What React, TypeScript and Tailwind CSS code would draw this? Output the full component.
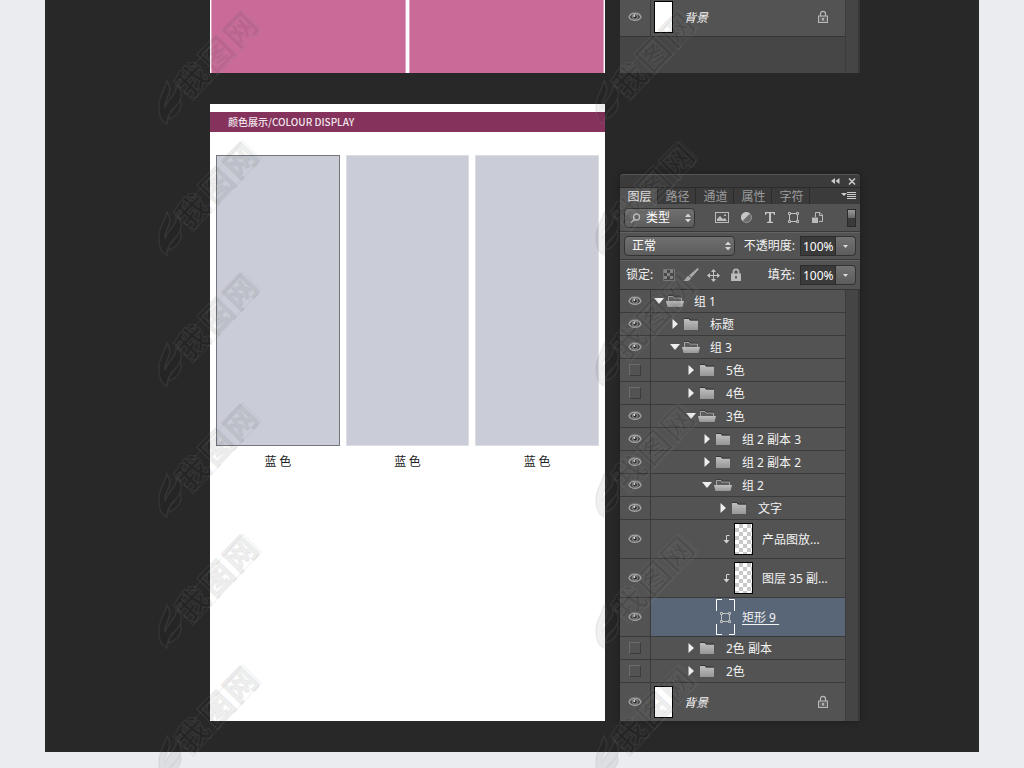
import React from 'react';

type Layer = {
  name: string;
  level: number;
  visible?: boolean;
  kind?: 'open' | 'closed' | 'clip' | 'shape';
};

const layers: Layer[] = [
  { name: '组 1', level: 0, visible: true, kind: 'open' },
  { name: '标题', level: 1, visible: true, kind: 'closed' },
  { name: '组 3', level: 1, visible: true, kind: 'open' },
  { name: '5色', level: 2, kind: 'closed' },
  { name: '4色', level: 2, kind: 'closed' },
  { name: '3色', level: 2, visible: true, kind: 'open' },
  { name: '组 2 副本 3', level: 3, visible: true, kind: 'closed' },
  { name: '组 2 副本 2', level: 3, visible: true, kind: 'closed' },
  { name: '组 2', level: 3, visible: true, kind: 'open' },
  { name: '文字', level: 4, visible: true, kind: 'closed' },
  { name: '产品图放...', level: 4, visible: true, kind: 'clip' },
  { name: '图层 35 副...', level: 4, visible: true, kind: 'clip' },
  { name: '矩形 9', level: 4, visible: true, kind: 'shape' },
  { name: '2色 副本', level: 2, kind: 'closed' },
  { name: '2色', level: 2, kind: 'closed' },
];

const indents = ['pl-px', 'pl-[17px]', 'pl-[33px]', 'pl-[49px]', 'pl-[65px]'];

function Eye() {
  return (
    <svg width="14" height="12" viewBox="0 0 14 12" fill="none">
      <path d="M1 6C3 1 11 1 13 6C11 10.500 3 10.500 1 6Z" fill="#4a4a4a" stroke="#a2a2a2" strokeWidth="1.300" />
      <path d="M1 3.500C3.500 .5 10.500 .5 13 3.500" stroke="#6c6c6c" />
      <circle cx="7" cy="5.800" r="2.400" fill="#2a2a2a" stroke="#a5a5a5" strokeWidth="0.900" />
      <circle cx="6.300" cy="5" r="1" fill="#e4e4e4" />
    </svg>
  );
}

function Folder({ open }: { open: boolean }) {
  return (
    <svg width="18" height="13" viewBox="0 0 18 13">
      <defs>
        <linearGradient id="folderFace" x1="0" y1="0" x2="0" y2="1">
          <stop offset="0" stopColor="#c0c0c0" />
          <stop offset="1" stopColor="#969696" />
        </linearGradient>
      </defs>
      {open ? (
        <>
          <path d="M2.500 7V1.500H7L8 3H15.500V7" fill="#5c5c5c" stroke="#a5a5a5" />
          <path d="M2 .5H7L8 2H16" fill="none" stroke="#333" strokeWidth=".7" />
          <path d="M0 6H18L16.500 12H1.500Z" fill="url(#folderFace)" />
        </>
      ) : (
        <>
          <path d="M2 12V1H7L8 2.500H16V12Z" fill="url(#folderFace)" />
          <path d="M2 .5H7L8 2H16" fill="none" stroke="#353535" />
        </>
      )}
    </svg>
  );
}

function Lock({ filled = false }: { filled?: boolean }) {
  return (
    <svg width="12" height="14" viewBox="0 0 12 14" fill="none">
      <path d="M3.500 6V4C3.500 .5 8.500 .5 8.500 4V6" stroke="#b9b9b9" strokeWidth={filled ? 1.8 : 1.2} />
      <rect x="1.500" y="6" width="9" height="6.500" fill={filled ? '#bdbdbd' : '#666'} stroke="#b9b9b9" />
      <path d="M6 8V10.500" stroke={filled ? '#444' : '#ccc'} strokeWidth="1.500" />
    </svg>
  );
}

function ShapeIcon() {
  return (
    <svg width="13" height="13" viewBox="0 0 13 13" fill="none" stroke="#c0c0c0">
      <path d="M3.500 2.500H9.500M3.500 10.500H9.500M2.500 3.500V9.500M10.500 3.500V9.500" />
      <path d="M1.500 1.500h2v2h-2zM9.500 1.500h2v2h-2zM1.500 9.500h2v2h-2zM9.500 9.500h2v2h-2z" />
    </svg>
  );
}

function Stepper() {
  return (
    <svg className="pointer-events-none absolute right-1 top-1/2 -translate-y-1/2" width="6" height="9" viewBox="0 0 6 9" fill="#d5d5d5">
      <path d="M0 3.500L3 0L6 3.500ZM0 5.500L3 9L6 5.500Z" />
    </svg>
  );
}

function VisibilityCell({ visible, name }: { visible?: boolean; name: string }) {
  return (
    <button
      aria-label={name}
      aria-pressed={!!visible}
      className="flex w-[31px] shrink-0 items-center justify-center border-r border-[#3a3a3a] bg-[#535353]"
    >
      {visible ? <Eye /> : <span className="size-3 border border-b-[#3c3c3c] border-l-[#6c6c6c] border-r-[#3c3c3c] border-t-[#6c6c6c]" />}
    </button>
  );
}

function ClippedThumb() {
  return (
    <>
      <svg width="7" height="9" viewBox="0 0 7 9" fill="none" stroke="#d2d2d2">
        <path d="M6.500 .5H3.500V7" />
        <path d="M.5 5H6.500L3.500 8.500Z" fill="#d2d2d2" stroke="none" />
      </svg>
      <span className="ml-1 h-8 w-[19px] border border-black bg-[repeating-conic-gradient(#c9c9c9_0%_25%,#fff_0%_50%)] bg-[length:8px_8px]" />
    </>
  );
}

function ShapeThumb() {
  return (
    <span className="flex h-9 w-[19px] flex-col items-center justify-between">
      <svg width="19" height="12" viewBox="0 0 19 12" fill="none" stroke="#fff">
        <path d="M.5 12V.5H6M13 .5H18.500V12" />
      </svg>
      <ShapeIcon />
      <svg width="19" height="11" viewBox="0 0 19 11" fill="none" stroke="#fff">
        <path d="M.5 0V10.500H6M13 10.500H18.500V0" />
      </svg>
    </span>
  );
}

function LayerRow({ layer }: { layer: Layer }) {
  const { name, level, visible, kind } = layer;
  const group = kind === 'open' || kind === 'closed';
  return (
    <li className={`flex border-b border-[#3a3a3a] ${group ? 'h-[23px]' : 'h-[39px]'}`}>
      <VisibilityCell visible={visible} name={name} />
      {group && (
        <div className={`flex grow items-center ${indents[level]}`}>
          <button aria-label={name} aria-expanded={kind === 'open'} className="flex w-[14px] items-center justify-center">
            <svg width="10" height="10" viewBox="0 0 10 10" fill="#eee">
              {kind === 'open' ? <path d="M0 2H10L5 8Z" /> : <path d="M2.500 0L8 5L2.500 10Z" />}
            </svg>
          </button>
          <Folder open={kind === 'open'} />
          <span className="ml-[10px] pt-[2px]">{name}</span>
        </div>
      )}
      {kind === 'clip' && (
        <div className="flex grow items-center pl-[72px]">
          <ClippedThumb />
          <span className="ml-[9px] pt-[2px]">{name}</span>
        </div>
      )}
      {kind === 'shape' && (
        <div className="flex grow items-center bg-[#596678] pl-[65px]">
          <ShapeThumb />
          <span className="ml-[7px] pt-[2px] underline underline-offset-2">{name}&nbsp;</span>
        </div>
      )}
    </li>
  );
}

function BackgroundRow() {
  return (
    <div className="flex h-[38px]">
      <VisibilityCell visible name="背景" />
      <div className="flex grow items-center pl-[3px] pr-4">
        <span className="h-8 w-[19px] border border-black bg-white" />
        <span className="ml-[11px] grow pt-[2px] italic">背景</span>
        <Lock />
      </div>
    </div>
  );
}

function Percent({ id, label }: { id: string; label: string }) {
  return (
    <div className="ml-auto flex items-center">
      <label htmlFor={id} className="mr-[5px]">{label}</label>
      <input id={id} defaultValue="100%" className="h-5 w-9 border border-[#2c2c2c] bg-[#3a3a3a] pl-[2px] text-[12px] text-white" />
      <button aria-label={label} className="flex h-5 w-5 items-center justify-center rounded-r-sm border border-l-0 border-[#333] bg-linear-to-b from-[#727272] to-[#5c5c5c]">
        <svg width="5" height="3" viewBox="0 0 5 3" fill="#ddd"><path d="M0 0H5L2.500 3Z" /></svg>
      </button>
    </div>
  );
}

const tabs = ['图层', '路径', '通道', '属性', '字符'];

function PanelHead() {
  return (
    <>
      <div className="flex h-[13px] items-center justify-end gap-2 rounded-t-sm border-t border-[#555] bg-[#3b3b3b] pr-1">
        <button aria-label="折叠">
          <svg width="9" height="6" viewBox="0 0 9 6" fill="#ccc"><path d="M4 0V6L0 3ZM8.500 0V6L4.500 3Z" /></svg>
        </button>
        <button aria-label="关闭">
          <svg width="8" height="7" viewBox="0 0 8 7" stroke="#ccc" strokeWidth="1.500"><path d="M1 .5L7 6.500M7 .5L1 6.500" /></svg>
        </button>
      </div>
      <div className="flex h-[17px] border-t border-[#2b2b2b] bg-[#3b3b3b]">
        {tabs.map((tab, i) => (
          <button
            key={tab}
            className={`w-[38px] border-r border-[#2b2b2b] pl-[2px] leading-[17px] ${i === 0 ? 'bg-[#535353] text-[#e8e8e8]' : 'text-[#9b9b9b]'}`}
          >
            {tab}
          </button>
        ))}
        <button aria-label="菜单" className="ml-auto mr-1 flex items-center">
          <svg width="15" height="10" viewBox="0 0 15 10" fill="#ccc">
            <path d="M0 2H6L3 5ZM6 1H15V2H6ZM6 3H15V4H6ZM6 5H15V6H6ZM6 7H15V8H6Z" />
          </svg>
        </button>
      </div>
    </>
  );
}

function FilterRow() {
  return (
    <div className="flex h-7 items-center border-b border-[#393939] px-1">
      <div className="relative">
        <svg className="pointer-events-none absolute left-[6px] top-[5px]" width="11" height="10" viewBox="0 0 11 10" fill="none" stroke="#c5c5c5" strokeWidth="1.300">
          <circle cx="6.500" cy="4" r="3" />
          <path d="M4.500 6.500L1 9.500" />
        </svg>
        <select aria-label="类型" className="h-5 w-[71px] appearance-none rounded-sm border border-[#333] bg-linear-to-b from-[#707070] to-[#5c5c5c] pl-[21px] leading-4 text-white">
          <option>类型</option>
        </select>
        <Stepper />
      </div>
      <div className="ml-[20px] flex grow items-center gap-[11px]">
        <button aria-label="像素图层">
          <svg width="14" height="13" viewBox="0 0 14 13" fill="none">
            <rect x=".5" y="1.500" width="13" height="10" stroke="#bbb" />
            <path d="M2 10V8L5 5L8 8L10 7L12 10Z" fill="#bbb" />
            <path d="M9 3.500H11V5H9Z" fill="#bbb" />
          </svg>
        </button>
        <button aria-label="调整图层">
          <svg width="13" height="13" viewBox="0 0 13 13">
            <circle cx="6.500" cy="6.500" r="5" fill="#6c6c6c" stroke="#999" />
            <path d="M10 2.500A5.300 5.300 0 1 0 2.500 10Z" fill="#c5c5c5" />
          </svg>
        </button>
        <button aria-label="文字图层">
          <svg width="12" height="13" viewBox="0 0 12 13" fill="#c5c5c5">
            <path d="M1 1H11V4H10L9.500 2.300H7V10.500L9 11V12H3V11L5 10.500V2.300H2.500L2 4H1Z" />
          </svg>
        </button>
        <button aria-label="形状图层"><ShapeIcon /></button>
        <button aria-label="智能对象">
          <svg width="13" height="13" viewBox="0 0 13 13" fill="none" stroke="#bbb">
            <path d="M4.500 6V1.500H9L11.500 4V10.500H8" />
            <path d="M8.500 1.500V4.500H11.500" />
            <path d="M1 6.500H7V12H1Z" fill="#bbb" stroke="none" />
          </svg>
        </button>
      </div>
      <button aria-label="过滤开关" className="h-[18px] w-[9px] border border-[#2a2a2a] bg-[#3a3a3a]">
        <span className="mb-2 block h-2 bg-linear-to-b from-[#999] to-[#686868]" />
      </button>
    </div>
  );
}

function ControlRows() {
  return (
    <>
      <div className="flex h-7 items-center border-b border-t border-b-[#393939] border-t-[#636363] px-1">
        <div className="relative">
          <select aria-label="混合模式" className="h-5 w-[111px] appearance-none rounded-sm border border-[#333] bg-linear-to-b from-[#707070] to-[#5c5c5c] pl-[7px] leading-4 text-white">
            <option>正常</option>
          </select>
          <Stepper />
        </div>
        <Percent id="opacity" label="不透明度:" />
      </div>
      <div className="flex h-[30px] items-center border-b border-t border-b-[#343434] border-t-[#636363] pl-[6px] pr-1">
        <span>锁定:</span>
        <div className="ml-[10px] flex items-center gap-2">
          <button aria-label="锁定透明像素">
            <svg width="12" height="12" viewBox="0 0 12 12">
              <path d="M.5 .5h11v11h-11z" fill="#484848" stroke="#777" />
              <path d="M1 1h3v3h-3zM7 1h3v3h-3zM4 4h3v3h-3zM1 7h3v3h-3zM7 7h3v3h-3z" fill="#858585" />
            </svg>
          </button>
          <button aria-label="锁定图像像素">
            <svg width="16" height="14" viewBox="0 0 16 14" fill="#aaa">
              <path d="M14.500 0L16 1L8.500 9.500L6 7.500ZM5.500 8L8 10C6.500 13.500 3 13.500 0 12.500C3 12 3 8.500 5.500 8Z" />
            </svg>
          </button>
          <button aria-label="锁定位置">
            <svg width="13" height="13" viewBox="0 0 13 13">
              <path d="M6.500 2V11M2 6.500H11" stroke="#c4c4c4" />
              <path d="M4 3L6.500 0L9 3ZM4 10L6.500 13L9 10ZM3 4L0 6.500L3 9ZM10 4L13 6.500L10 9Z" fill="#c4c4c4" />
            </svg>
          </button>
          <button aria-label="锁定全部" className="ml-[2px]"><Lock filled /></button>
        </div>
        <Percent id="fill" label="填充:" />
      </div>
    </>
  );
}

function LayersPanel() {
  return (
    <section className="mt-[70px] w-60 shrink-0 rounded-t-sm bg-[#535353] shadow-[0_0_6px_#1c1c1c]">
      <PanelHead />
      <FilterRow />
      <ControlRows />
      <div className="flex">
        <div className="grow">
          <ul>
            {layers.map((layer) => (
              <LayerRow key={layer.name} layer={layer} />
            ))}
          </ul>
          <BackgroundRow />
        </div>
        <div className="w-[15px] border-l border-r-2 border-l-[#3c3c3c] border-r-[#383838] bg-[#454545]" />
      </div>
    </section>
  );
}

const swatches = ['first', 'second', 'third'];

function Poster() {
  return (
    <section className="w-[395px] shrink-0 bg-white pt-2">
      <h2 className="h-5 bg-[#85325c] pl-[18px] font-['Noto_Sans_CJK_SC',sans-serif] text-[10px] font-medium leading-[19px] text-[#f1e5eb]">
        颜色展示/COLOUR DISPLAY
      </h2>
      <div className="mt-[23px] grid grid-cols-3 gap-[6px] px-[6px]">
        {swatches.map((id, i) => (
          <figure key={id}>
            <div className={`h-[291px] border bg-[#cacdd7] ${i === 0 ? 'border-[#74767b]' : 'border-[#dcdee4]'}`} />
            <figcaption className="mt-[6px] text-center font-['Noto_Sans_CJK_SC',sans-serif] text-[12px] leading-[18px] text-[#222]">
              蓝 色
            </figcaption>
          </figure>
        ))}
      </div>
    </section>
  );
}

function Watermark() {
  return (
    <svg className="overflow-visible" width="130" height="131" viewBox="0 0 130 131" aria-hidden="true">
      <g fill="#000" fillOpacity="0.060" stroke="#909090" strokeOpacity="0.130" strokeWidth="1.500">
        <path d="M10 74C7 86 1 90 2 101C2 109 5 115 10 117C8 105 23 101 24 89C25 84 22 81 19 78C21 87 11 91 8 101C6 91 18 86 10 74ZM12 112C22 108 26 100 23 92C23 99 11 101 12 112Z" />
        <text
          transform="translate(36 73) rotate(-46)"
          x="-16 19 53"
          y="11"
          fontSize="32"
          fontWeight="700"
          fontFamily="Noto Sans CJK SC, sans-serif"
        >
          我图网
        </text>
        <path d="M20 77L86 3L104 21L36 94Z" fill="none" strokeOpacity="0.090" />
      </g>
    </svg>
  );
}

function WatermarkColumn() {
  return (
    <div className="flex flex-col">
      {[0, 1, 2, 3, 4, 5].map((n) => (
        <Watermark key={n} />
      ))}
    </div>
  );
}

export default function App() {
  return (
    <div className="relative min-h-screen overflow-hidden bg-[#eaecf0] px-[45px] pb-4 font-['Noto_Sans','Noto_Sans_CJK_SC',sans-serif] text-[12px] leading-4 text-[#f2f2f2]">
      <main className="bg-[#282828] pb-[31px] pl-[165px]">
        <div className="flex h-[73px] gap-[15px]">
          <div className="grid w-[395px] shrink-0 grid-cols-2 gap-[3px] bg-white px-px">
            <div className="border-x border-[#dfa5c0] bg-[#c96a98]" />
            <div className="border-x border-[#dfa5c0] bg-[#c96a98]" />
          </div>
          <div className="flex w-60 shrink-0 bg-[#464646]">
            <div className="grow">
              <div className="flex h-[37px] items-end border-b border-[#353535] bg-[#535353]">
                <div className="-mt-1 grow">
                  <BackgroundRow />
                </div>
              </div>
            </div>
            <div className="w-[15px] border-l border-r-2 border-l-[#3c3c3c] border-r-[#383838] bg-[#454545]" />
          </div>
        </div>
        <div className="mt-[31px] flex gap-[15px]">
          <Poster />
          <LayersPanel />
        </div>
      </main>
      <div className="pointer-events-none absolute left-[157px] top-[7px] flex gap-[307px]">
        <WatermarkColumn />
        <WatermarkColumn />
      </div>
    </div>
  );
}
